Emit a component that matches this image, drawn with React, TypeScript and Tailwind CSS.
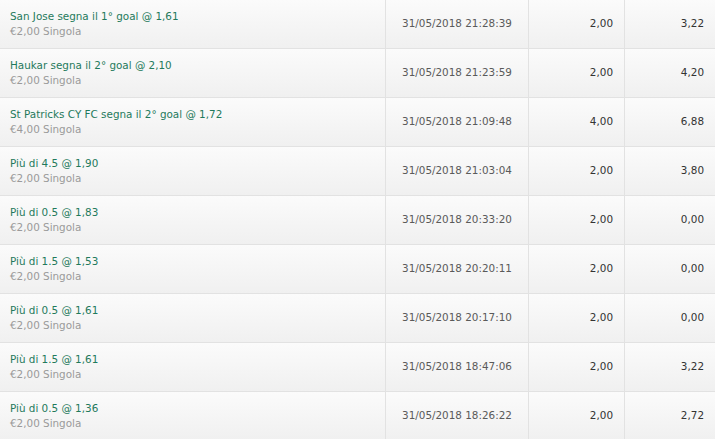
const bets = [
  { label: 'San Jose segna il 1° goal @ 1,61', stake: '€2,00 Singola', date: '31/05/2018 21:28:39', amount: '2,00', win: '3,22' },
  { label: 'Haukar segna il 2° goal @ 2,10', stake: '€2,00 Singola', date: '31/05/2018 21:23:59', amount: '2,00', win: '4,20' },
  { label: 'St Patricks CY FC segna il 2° goal @ 1,72', stake: '€4,00 Singola', date: '31/05/2018 21:09:48', amount: '4,00', win: '6,88' },
  { label: 'Più di 4.5 @ 1,90', stake: '€2,00 Singola', date: '31/05/2018 21:03:04', amount: '2,00', win: '3,80' },
  { label: 'Più di 0.5 @ 1,83', stake: '€2,00 Singola', date: '31/05/2018 20:33:20', amount: '2,00', win: '0,00' },
  { label: 'Più di 1.5 @ 1,53', stake: '€2,00 Singola', date: '31/05/2018 20:20:11', amount: '2,00', win: '0,00' },
  { label: 'Più di 0.5 @ 1,61', stake: '€2,00 Singola', date: '31/05/2018 20:17:10', amount: '2,00', win: '0,00' },
  { label: 'Più di 1.5 @ 1,61', stake: '€2,00 Singola', date: '31/05/2018 18:47:06', amount: '2,00', win: '3,22' },
  { label: 'Più di 0.5 @ 1,36', stake: '€2,00 Singola', date: '31/05/2018 18:26:22', amount: '2,00', win: '2,72' },
];

export default function App() {
  return (
    <div className="w-[715px] h-[439px] overflow-hidden bg-white font-['DejaVu_Sans',Verdana,sans-serif] text-[10.4px]">
      {bets.map((b) => (
        <div
          key={b.date}
          className="grid grid-cols-[386px_143px_96px_90px] h-[49px] border-b border-[#e2e2e2] bg-gradient-to-b from-[#fbfbfb] to-[#f0f0f0]"
        >
          {/* Bet description */}
          <div className="border-r border-[#e2e2e2] pl-[10px] pt-[9px] leading-[15px]">
            <div className="text-[#1f7a5c]">{b.label}</div>
            <div className="text-[#9a9a9a]">{b.stake}</div>
          </div>
          <div className="border-r border-[#e2e2e2] flex items-center justify-center text-[#5a5a5a]">{b.date}</div>
          <div className="border-r border-[#e2e2e2] flex items-center justify-end pr-[11px] text-[#333]">{b.amount}</div>
          <div className="flex items-center justify-end pr-[11px] text-[#333]">{b.win}</div>
        </div>
      ))}
    </div>
  );
}
